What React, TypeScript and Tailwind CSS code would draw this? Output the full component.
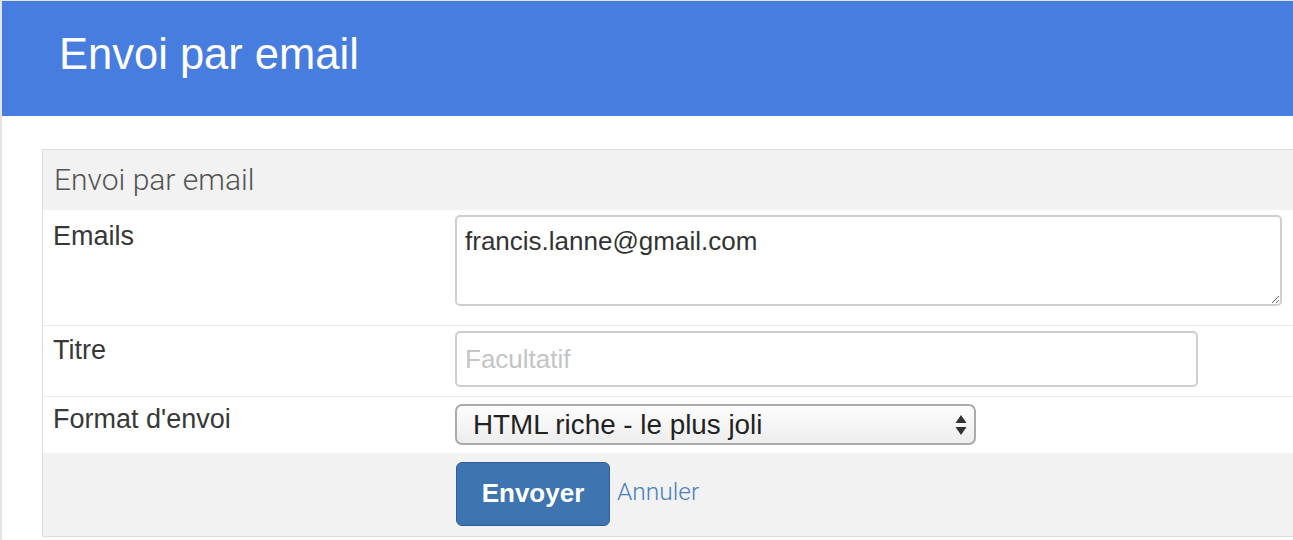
export default function App() {
  return (
    <div
      className="h-[540px] w-[1293px] overflow-hidden border-t border-l-2 border-[#e4e4e4] bg-white"
      style={{ fontFamily: '"Liberation Sans", Arial, sans-serif' }}
    >
      <header className="flex h-[115px] items-center bg-[#477ddf] pb-[8px] pl-[57px]">
        <h1 className="text-[43.5px] leading-none text-white">Envoi par email</h1>
      </header>

      <div className="pt-[33px] pl-[40px]">
        <section className="w-[1300px] border border-[#dcdcdc]">
          <div className="flex h-[60px] items-center bg-[#f2f2f2] pl-[11px]">
            <h2 className="text-[30px] leading-none font-light text-[#555]" style={{ fontFamily: 'Roboto, sans-serif' }}>
              Envoi par email
            </h2>
          </div>

          <div className="grid grid-cols-[412px_1fr] border-b border-[#eaeaea] pt-[5px] pb-[19px]">
            <label className="pt-[8px] pl-[10px] text-[27px] leading-none text-[#383838]">Emails</label>
            <textarea
              readOnly
              defaultValue="francis.lanne@gmail.com"
              className="h-[91px] w-[827px] resize rounded-[5px] border-2 border-[#cfcfcf] px-[8px] pt-[9px] text-[26px] leading-[30px] text-[#333] outline-none"
            />
          </div>

          <div className="grid grid-cols-[412px_1fr] border-b border-[#eaeaea] pt-[5px] pb-[9px]">
            <label className="pt-[6px] pl-[10px] text-[27px] leading-none text-[#383838]">Titre</label>
            <input
              placeholder="Facultatif"
              className="h-[56px] w-[743px] rounded-[5px] border-2 border-[#cfcfcf] px-[8px] text-[26px] text-[#333] outline-none placeholder:text-[#c4c4c4]"
            />
          </div>

          <div className="grid grid-cols-[412px_1fr] pt-[7px] pb-[8px]">
            <label className="pt-[2px] pl-[10px] text-[27px] leading-none text-[#383838]">Format d'envoi</label>
            <div className="flex h-[41px] w-[521px] items-center justify-between rounded-[7px] border-2 border-[#ababab] bg-gradient-to-b from-[#fdfdfd] to-[#ededed] pr-[7px] pl-[16px]">
              <span className="text-[27.8px] leading-none text-[#222]">HTML riche - le plus joli</span>
              <svg width="12" height="24" viewBox="0 0 12 24">
                <path d="M6 2 L11.5 10 L0.5 10 Z" fill="#333" />
                <path d="M6 22 L11.5 14 L0.5 14 Z" fill="#333" />
              </svg>
            </div>
          </div>

          <div className="grid h-[83px] grid-cols-[413px_1fr] bg-[#f2f2f2] pt-[9px]">
            <div />
            <div className="flex items-center gap-[7px] self-start">
              <button className="h-[64px] w-[154px] rounded-[6px] border border-[#2e5f99] bg-[#3e74b0] pb-[2px] text-[26px] font-bold text-white">
                Envoyer
              </button>
              <a className="pb-[4px] text-[24.5px] text-[#4a80c0]" style={{ fontFamily: 'Roboto, sans-serif', fontWeight: 300 }}>
                Annuler
              </a>
            </div>
          </div>
        </section>
      </div>
    </div>
  );
}
